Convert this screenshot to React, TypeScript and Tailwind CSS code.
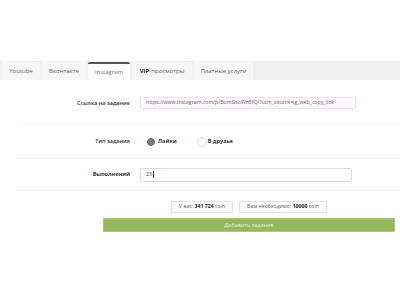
const tabs = [
  { name: "Youtube", w: "w-[38px]" },
  { name: "Вконтакте", w: "w-[44px]" },
  { name: "Instagram", w: "w-[42px]", active: true },
  { name: "VIP", w: "w-[60px]", vip: true },
  { name: "Платные услуги", w: "w-[59px]" },
];

const App = () => {
  return (
    <div className="w-[400px] h-[300px] bg-white pt-[61px] font-['Open_Sans',sans-serif] text-[#333] overflow-hidden">
      {/* Tabs */}
      <div className="flex items-end gap-[2px] h-[19px] bg-[#f0f0f0] pl-[2px]">
        {tabs.map((t) => (
          <div
            key={t.name}
            className={`${t.w} h-[18px] flex items-center justify-center text-[6px] rounded-t-[2px] ${
              t.active ? "bg-white border-t-2 border-[#555] text-[#777]" : "bg-[#f7f7f7] text-[#666]"
            }`}
          >
            {t.vip ? (
              <span>
                <b className="text-[#222]">VIP</b>-просмотры
              </span>
            ) : (
              t.name
            )}
          </div>
        ))}
      </div>

      {/* Form */}
      <div className="ml-[17px]">
        <div className="flex items-center pt-[17px] pb-[15px] border-b border-[#f4f4f4]">
          <div className="w-[113px] text-right text-[5.5px] font-semibold text-[#333]">Ссылка на задание</div>
          <div className="ml-[10px] w-[216px] h-[12px] flex items-center px-[5px] border border-[#ebe4ea] bg-[#fdf9fd] rounded-[1px] text-[5.2px] text-[#666] whitespace-nowrap overflow-hidden">
            https://www.instagram.com/p/BumGsoWn5fQ/?utm_source=ig_web_copy_link
          </div>
        </div>

        <div className="flex items-center h-[34px] border-b border-[#f4f4f4]">
          <div className="w-[113px] text-right text-[5.5px] font-semibold text-[#333]">Тип задания</div>
          <div className="ml-[17px] flex items-center">
            <span className="w-[8px] h-[8px] rounded-full bg-[#7a7a7a] border border-[#6a6a6a]" />
            <span className="ml-[3px] text-[5.5px] font-bold text-[#333]">Лайки</span>
            <span className="ml-[20px] w-[10px] h-[10px] rounded-full bg-white border border-[#ddd]" />
            <span className="ml-[1px] text-[5.5px] font-bold text-[#333]">В друзья</span>
          </div>
        </div>

        <div className="flex items-center h-[32px] border-b border-[#f4f4f4]">
          <div className="w-[113px] text-right text-[5.5px] font-bold text-[#333]">Выполнений</div>
          <div className="ml-[10px] w-[212px] h-[14px] flex items-center px-[5px] border border-[#ddd] rounded-[2px] text-[5.5px] text-[#555]">
            25<span className="w-px h-[7px] bg-[#333] ml-[1px]" />
          </div>
        </div>
      </div>

      {/* Coins + submit */}
      <div className="ml-[103px] w-[292px]">
        <div className="flex justify-center gap-[6px] mt-[10px]">
          <div className="w-[62px] h-[12px] flex items-center justify-center border border-[#e3e3e3] text-[5.2px] text-[#555]">
            <span>
              У вас: <b className="text-[#222]">341 724</b> coin
            </span>
          </div>
          <div className="w-[88px] h-[12px] flex items-center justify-center border border-[#e3e3e3] text-[5.2px] text-[#555]">
            <span>
              Вам необходимо: <b className="text-[#222]">10000</b> coin
            </span>
          </div>
        </div>
        <div className="mt-[5px] h-[14px] flex items-center justify-center bg-[#94b85c] border border-[#a9cc72] text-[5.5px] text-[#e8f2da]">
          Добавить задание
        </div>
      </div>
    </div>
  );
};

export default App;
